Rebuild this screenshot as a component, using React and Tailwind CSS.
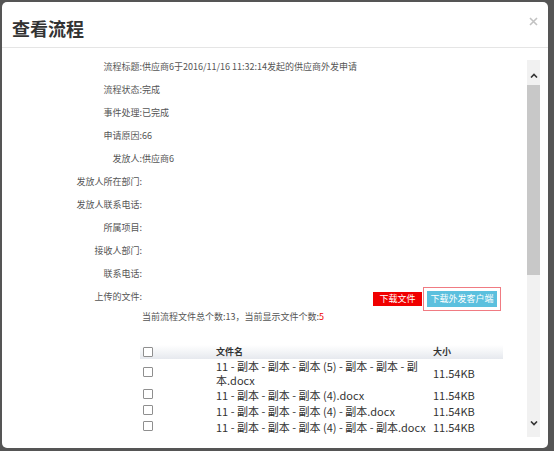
import React from 'react';

const fields = [
  ['流程标题', '供应商6于2016/11/16 11:32:14发起的供应商外发申请'],
  ['流程状态', '完成'],
  ['事件处理', '已完成'],
  ['申请原因', '66'],
  ['发放人', '供应商6'],
  ['发放人所在部门', ''],
  ['发放人联系电话', ''],
  ['所属项目', ''],
  ['接收人部门', ''],
  ['联系电话', ''],
];

const files = [
  { name: '11 - 副本 - 副本 - 副本 (5) - 副本 - 副本 - 副本.docx', tall: true },
  { name: '11 - 副本 - 副本 - 副本 (4).docx' },
  { name: '11 - 副本 - 副本 - 副本 (4) - 副本.docx' },
  { name: '11 - 副本 - 副本 - 副本 (4) - 副本 - 副本.docx' },
  { name: '11 - 副本 - 副本 - 副本 (4) - 副本 - 副本 - 副本.docx' },
];

const Box = () => (
  <span className="block w-[10px] h-[10px] border border-[#8f8f8f] bg-white rounded-[1px]" />
);

const Chevron = ({ up }) => (
  <svg width="8" height="5" viewBox="0 0 8 5" fill="none">
    <polyline
      points={up ? '1,4.5 4,1.5 7,4.5' : '1,0.5 4,3.5 7,0.5'}
      stroke="#333"
      strokeWidth="1.6"
    />
  </svg>
);

export default function App() {
  return (
    <div
      className="w-[554px] h-[451px] bg-[#555] pt-[2px] pl-[2px] overflow-hidden"
      style={{ fontFamily: '"Noto Sans CJK SC", "Noto Sans", sans-serif' }}
    >
      <div className="w-[546px] h-[446px] bg-white rounded-[5px] flex flex-col overflow-hidden">
        {/* header */}
        <div className="h-[46px] shrink-0 border-b border-[#e5e5e5] flex justify-between pl-[10px] pr-[10px]">
          <h1 className="text-[18px] font-bold text-[#333] leading-[20px] pt-[16px]">查看流程</h1>
          <svg className="mt-[15px]" width="9" height="9" viewBox="0 0 9 9">
            <path d="M1 1 L8 8 M8 1 L1 8" stroke="#c2c2c2" strokeWidth="1.6" />
          </svg>
        </div>

        {/* body */}
        <div className="pt-[12px] pl-[14px]">
          <div className="flex h-[377px] w-[524px]">
            <div className="flex-1 overflow-hidden text-[9px] text-[#555]">
              {fields.map(([label, value]) => (
                <div key={label} className="flex h-[23px] leading-[14px] whitespace-nowrap">
                  <span className="w-[126px] shrink-0 text-right">{label}:</span>
                  <span>{value}</span>
                </div>
              ))}

              <div className="flex h-[20px] leading-[14px]">
                <span className="w-[126px] shrink-0 text-right">上传的文件:</span>
                <div className="flex-1" />
                <div className="flex items-center -mt-[3px] mr-[26px] h-[24px]">
                  <button className="w-[49px] h-[14px] mr-[1px] bg-[#f00000] text-white text-[9px] leading-[14px]">
                    下载文件
                  </button>
                  <div className="w-[78px] h-[24px] border border-[#f07b82] px-[3px] flex items-center">
                    <button className="w-[70px] h-[16px] bg-[#5bc0de] text-white text-[9px] leading-[16px]">
                      下载外发客户端
                    </button>
                  </div>
                </div>
              </div>

              <div className="pl-[126px] h-[14px] leading-[14px]">
                当前流程文件总个数:13，当前显示文件个数:<span className="text-[#ee0000]">5</span>
              </div>

              <div className="mt-[21px] ml-[124px] w-[363px]">
                <div className="flex items-center h-[14px] bg-gradient-to-b from-white to-[#e6e9ee] font-bold text-[#333]">
                  <div className="w-[76px] pl-[3px]"><Box /></div>
                  <div className="w-[217px]">文件名</div>
                  <div>大小</div>
                </div>
                {files.map((f) => (
                  <div
                    key={f.name}
                    className={`flex items-center text-[11px] text-[#333] ${f.tall ? 'h-[28px]' : 'h-[16px]'}`}
                  >
                    <div className="w-[76px] shrink-0 pl-[3px] mb-[2px]"><Box /></div>
                    <div
                      className={`w-[217px] shrink-0 pr-[15px] leading-[14px] ${f.tall ? '' : 'whitespace-nowrap overflow-hidden'}`}
                    >
                      {f.name}
                    </div>
                    <div className="whitespace-nowrap">11.54KB</div>
                  </div>
                ))}
              </div>
            </div>

            {/* scrollbar */}
            <div className="w-[13px] shrink-0 bg-[#f1f1f1] flex flex-col">
              <div className="h-[25px] flex items-end justify-center pb-[7px]"><Chevron up /></div>
              <div className="h-[190px] bg-[#c8c8c8]" />
              <div className="flex-1" />
              <div className="h-[22px] flex justify-center pt-[6px]"><Chevron /></div>
            </div>
          </div>
        </div>
      </div>
    </div>
  );
}
